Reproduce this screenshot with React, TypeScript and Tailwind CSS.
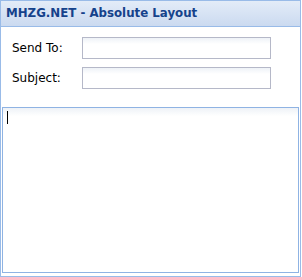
import React from "react";

const App: React.FC = () => {
  return (
    <div className="w-[302px] h-[277px] bg-white" style={{ fontFamily: "'DejaVu Sans', Verdana, sans-serif" }}>
      <div className="w-[301px] h-[277px] flex flex-col border border-[#99bbe8]">
        <div className="h-[26px] shrink-0 flex items-center pl-[5px] pt-[1px] border-b border-[#99bbe8] bg-gradient-to-b from-[#e3ecf8] to-[#cbdaf0]">
          <span className="text-[11.8px] font-bold text-[#15428b]">MHZG.NET - Absolute Layout</span>
        </div>
        <div className="flex-1 flex flex-col bg-white">
          <div className="flex items-center mt-[10px] h-[22px]">
            <label className="w-[81px] pl-[11px] text-[12px] text-black">Send To:</label>
            <input className="w-[189px] h-[22px] border border-[#b5b8c8] bg-gradient-to-b from-[#eef2f7] to-white to-[30%] outline-none" />
          </div>
          <div className="flex items-center mt-[8px] h-[22px]">
            <label className="w-[81px] pl-[11px] text-[12px] text-black">Subject:</label>
            <input className="w-[189px] h-[22px] border border-[#b5b8c8] bg-gradient-to-b from-[#eef2f7] to-white to-[30%] outline-none" />
          </div>
          <div className="mt-[18px] ml-[1px] mr-[1px] h-[166px] border border-[#8fb3e3] bg-gradient-to-b from-[#eef2f7] to-white to-[5%] relative">
            <div className="absolute left-[4px] top-[3px] w-[1px] h-[13px] bg-black" />
          </div>
        </div>
      </div>
    </div>
  );
};

export default App;
